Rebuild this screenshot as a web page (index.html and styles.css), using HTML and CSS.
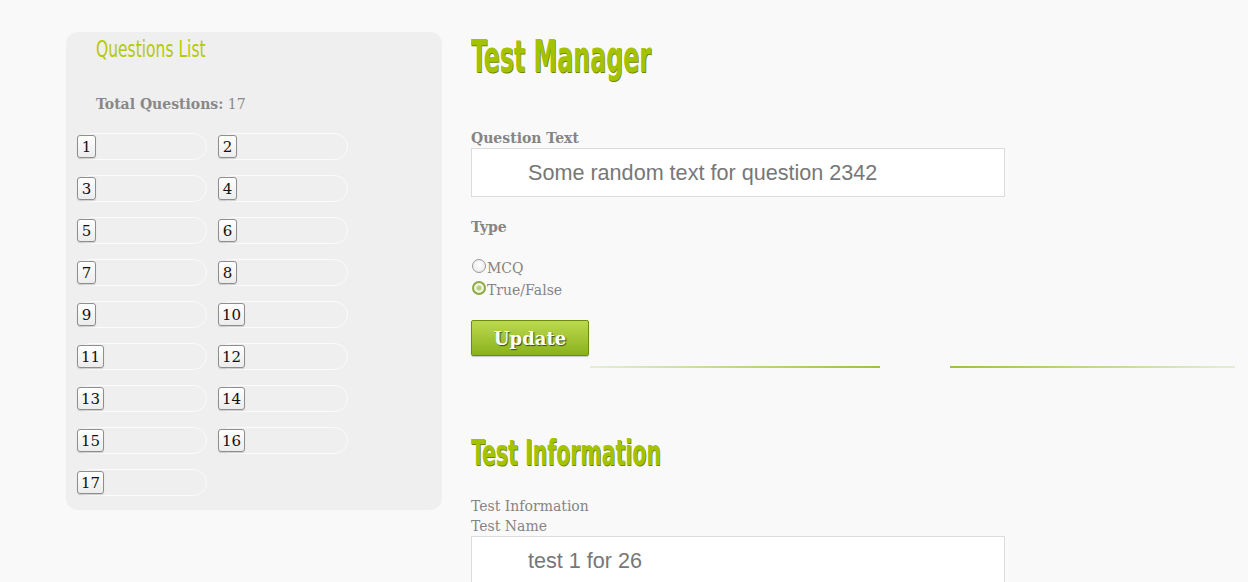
FILE: index.html
```html
<!DOCTYPE html>
<html>
<head>
<meta charset="utf-8">
<title>Test Manager</title>
<link rel="stylesheet" href="styles.css">
</head>
<body>
<div class="page">
  <aside class="sidebar">
    <h3 class="side-title"><span class="cond">Questions List</span></h3>
    <p class="total"><b>Total Questions:</b> 17</p>
    <div class="qgrid">
      <div class="qitem"><button class="qbtn">1</button></div>
      <div class="qitem"><button class="qbtn">2</button></div>
      <div class="qitem"><button class="qbtn">3</button></div>
      <div class="qitem"><button class="qbtn">4</button></div>
      <div class="qitem"><button class="qbtn">5</button></div>
      <div class="qitem"><button class="qbtn">6</button></div>
      <div class="qitem"><button class="qbtn">7</button></div>
      <div class="qitem"><button class="qbtn">8</button></div>
      <div class="qitem"><button class="qbtn">9</button></div>
      <div class="qitem"><button class="qbtn">10</button></div>
      <div class="qitem"><button class="qbtn">11</button></div>
      <div class="qitem"><button class="qbtn">12</button></div>
      <div class="qitem"><button class="qbtn">13</button></div>
      <div class="qitem"><button class="qbtn">14</button></div>
      <div class="qitem"><button class="qbtn">15</button></div>
      <div class="qitem"><button class="qbtn">16</button></div>
      <div class="qitem"><button class="qbtn">17</button></div>
    </div>
  </aside>
  <main class="main">
    <h1 class="title"><span class="cond">Test Manager</span></h1>
    <label class="label-bold">Question Text</label>
    <div class="field">Some random text for question 2342</div>
    <label class="label-bold label-type">Type</label>
    <div class="radios">
      <label class="radio-row"><span class="radio"></span>MCQ</label>
      <label class="radio-row"><span class="radio checked"></span>True/False</label>
    </div>
    <button class="update">Update</button>
    <div class="separator"><span class="sep-left"></span><span class="sep-right"></span></div>
    <h2 class="title2"><span class="cond">Test Information</span></h2>
    <div class="plain">Test Information</div>
    <div class="plain">Test Name</div>
    <div class="field">test 1 for 26</div>
  </main>
</div>
</body>
</html>
```
FILE: styles.css
```css
html, body {
  margin: 0;
  padding: 0;
}
body {
  background: #f9f9f9;
  font-family: "DejaVu Serif", serif;
  color: #858585;
  overflow: hidden;
}
.page {
  display: flex;
  align-items: flex-start;
  padding: 32px 0 0 66px;
  gap: 29px;
}
.cond {
  display: inline-block;
  font-family: "Liberation Sans Narrow", "DejaVu Sans Condensed", "Liberation Sans", sans-serif;
  transform-origin: 0 50%;
  white-space: nowrap;
}

/* Sidebar */
.sidebar {
  width: 376px;
  height: 478px;
  box-sizing: border-box;
  background: #efefef;
  border-radius: 12px;
  padding: 0 0 0 11px;
}
.side-title {
  margin: 0;
  padding: 3px 0 0 19px;
  height: 30px;
  line-height: 28px;
  font-size: 23px;
  font-weight: normal;
  color: #b3cb00;
}
.side-title .cond {
  transform: scaleX(0.75);
}
.total {
  margin: 0;
  padding: 29px 0 0 19px;
  font-size: 14px;
  line-height: 20px;
  height: 20px;
  color: #8a8a8a;
}
.total b {
  color: #888;
}
.qgrid {
  display: grid;
  grid-template-columns: 141px 141px;
  grid-auto-rows: 42px;
  margin-top: 19px;
}
.qitem {
  width: 130px;
  height: 27px;
  box-sizing: border-box;
  border: 1px solid #fbfbfb;
  border-radius: 14px;
  display: flex;
  align-items: center;
}
.qbtn {
  margin-left: -1px;
  height: 23px;
  min-width: 19px;
  padding: 0 3px;
  box-sizing: border-box;
  border: 1px solid #8e8e8e;
  border-radius: 3px;
  background: linear-gradient(#ffffff, #ececec);
  font-family: "DejaVu Serif", serif;
  font-size: 15px;
  line-height: 20px;
  color: #111;
  box-shadow: 0 1px 1px rgba(0,0,0,0.15);
}

/* Main */
.main {
  flex: 1;
  display: flex;
  flex-direction: column;
  align-items: flex-start;
  padding-top: 3px;
}
.title {
  margin: 0;
  height: 44px;
  line-height: 44px;
  font-size: 44px;
  font-weight: bold;
  color: #a5c200;
  text-shadow: 1px 1px 0 #6f8500;
}
.title .cond {
  transform: scaleX(0.6);
}
.label-bold {
  display: block;
  margin-top: 50px;
  font-size: 14px;
  line-height: 18px;
  font-weight: bold;
  color: #858585;
}
.field {
  margin-top: 1px;
  width: 534px;
  height: 49px;
  box-sizing: border-box;
  border: 1px solid #dcdcdc;
  background: #fff;
  padding-left: 56px;
  font-family: "Liberation Sans", Arial, sans-serif;
  font-size: 21.6px;
  line-height: 47px;
  color: #777;
}
.label-type {
  margin-top: 21px;
}
.radios {
  margin-top: 21px;
  display: flex;
  flex-direction: column;
}
.radio-row {
  display: flex;
  align-items: center;
  font-size: 14px;
  line-height: 22px;
  height: 22px;
  color: #858585;
}
.radio {
  width: 14px;
  height: 14px;
  box-sizing: border-box;
  border-radius: 50%;
  border: 1px solid #999;
  background: radial-gradient(circle at 50% 40%, #fff, #e6e6e6);
  margin: 0 1px 0 1px;
  position: relative;
  top: -2px;
}
.radio.checked {
  border: 2px solid #8ba84a;
  background: radial-gradient(circle, #b9d07a 0 2px, #eef4dc 3px);
}
.update {
  margin-top: 19px;
  width: 118px;
  height: 36px;
  border: 1px solid #6a8d10;
  border-radius: 2px;
  background: linear-gradient(#bcd94f, #8ab21c);
  color: #fff;
  font-family: "DejaVu Serif", serif;
  font-weight: bold;
  font-size: 18px;
  text-shadow: 1px 1px 1px #3a4a10;
  box-shadow: 0 1px 1px rgba(0,0,0,0.2);
  padding: 0;
}
.separator {
  margin-top: 10px;
  margin-left: 119px;
  width: 645px;
  height: 2px;
  display: flex;
  gap: 70px;
}
.sep-left {
  width: 290px;
  height: 2px;
  background: linear-gradient(to right, #e6edd4, #9cc23c);
}
.sep-right {
  width: 285px;
  height: 2px;
  background: linear-gradient(to right, #9cc23c, #e6edd4);
}
.title2 {
  margin: 66px 0 0 0;
  height: 36px;
  line-height: 36px;
  font-size: 36px;
  font-weight: bold;
  color: #a5c200;
  text-shadow: 1px 1px 0 #6f8500;
}
.title2 .cond {
  transform: scaleX(0.633);
}
.plain {
  font-size: 14px;
  line-height: 20px;
  color: #858585;
}
.title2 + .plain {
  margin-top: 26px;
}
.plain + .field {
  margin-top: 0;
}
```
